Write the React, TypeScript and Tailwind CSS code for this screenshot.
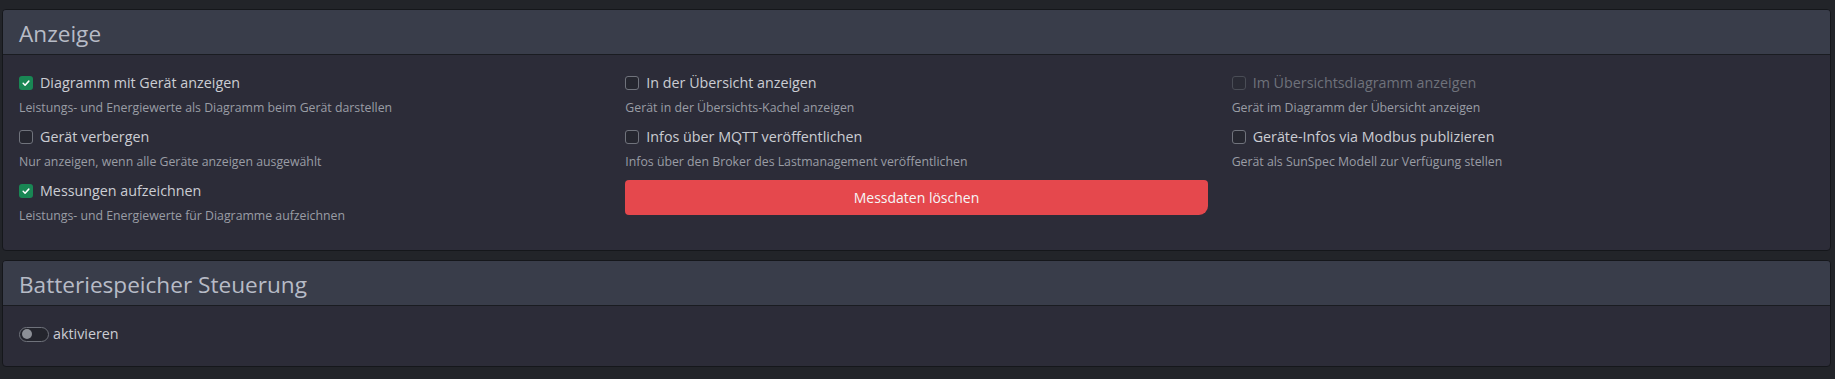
import { useState } from 'react';

const FONT = "font-['Open_Sans','Noto_Sans',sans-serif]";

interface CheckProps {
  label: string;
  hint: string;
  checked?: boolean;
  disabled?: boolean;
}

function CheckItem({ label, hint, checked = false, disabled = false }: CheckProps) {
  const [on, setOn] = useState(checked);
  return (
    <div className="flex flex-col">
      <label className="flex h-[22px] items-center gap-[7px]">
        <button
          type="button"
          disabled={disabled}
          onClick={() => setOn(!on)}
          className={
            on
              ? 'flex h-[14px] w-[14px] items-center justify-center rounded-[3px] bg-[#198754]'
              : disabled
                ? 'h-[14px] w-[14px] rounded-[3px] border border-[#4a4d56] bg-[#2a2b35]'
                : 'h-[14px] w-[14px] rounded-[3px] border border-[#70737c] bg-[#262730]'
          }
        >
          {on && (
            <svg viewBox="0 0 16 16" className="h-[10px] w-[10px]">
              <path d="M3.5 8.5l3 3 6-6.5" fill="none" stroke="#fff" strokeWidth="2.4" strokeLinecap="round" strokeLinejoin="round" />
            </svg>
          )}
        </button>
        <span className={disabled ? 'text-[14.3px] text-[#6f727b]' : 'text-[14.3px] text-[#cbcdd3]'}>{label}</span>
      </label>
      <p className="mt-[5px] h-[18px] text-[12.3px] leading-[18px] text-[#9a9da5]">{hint}</p>
    </div>
  );
}

function Card({ title, children }: { title: string; children: React.ReactNode }) {
  return (
    <section className="overflow-hidden rounded-[4px] border border-[#15171b] bg-[#2c2c38]">
      <div className="flex h-[45px] items-center border-b border-[#1a1c21] bg-[#393d4a] px-[16px] pt-[3px]">
        <h2 className="text-[22.6px] text-[#b7bbc6]">{title}</h2>
      </div>
      {children}
    </section>
  );
}

export default function App() {
  const [active, setActive] = useState(false);

  return (
    <div className={`min-h-[379px] w-[1835px] bg-[#222429] pl-[2px] pr-[4px] pt-[9px] ${FONT}`}>
      <Card title="Anzeige">
        <div className="grid grid-cols-3 gap-x-6 px-[16px] pb-[25px] pt-[17px]">
          <div className="flex flex-col gap-[9px]">
            <CheckItem label="Diagramm mit Gerät anzeigen" hint="Leistungs- und Energiewerte als Diagramm beim Gerät darstellen" checked />
            <CheckItem label="Gerät verbergen" hint="Nur anzeigen, wenn alle Geräte anzeigen ausgewählt" />
            <CheckItem label="Messungen aufzeichnen" hint="Leistungs- und Energiewerte für Diagramme aufzeichnen" checked />
          </div>
          <div className="flex flex-col gap-[9px]">
            <CheckItem label="In der Übersicht anzeigen" hint="Gerät in der Übersichts-Kachel anzeigen" />
            <CheckItem label="Infos über MQTT veröffentlichen" hint="Infos über den Broker des Lastmanagement veröffentlichen" />
            <button
              type="button"
              className="h-[35px] w-full rounded-[4px] rounded-br-[9px] bg-[#e5484d] text-[14px] text-[#f6f6f6]"
            >
              Messdaten löschen
            </button>
          </div>
          <div className="flex flex-col gap-[9px]">
            <CheckItem label="Im Übersichtsdiagramm anzeigen" hint="Gerät im Diagramm der Übersicht anzeigen" disabled />
            <CheckItem label="Geräte-Infos via Modbus publizieren" hint="Gerät als SunSpec Modell zur Verfügung stellen" />
          </div>
        </div>
      </Card>

      <div className="mt-[9px]">
        <Card title="Batteriespeicher Steuerung">
          <div className="px-[16px] pb-[21px] pt-[17px]">
            <label className="flex h-[22px] items-center gap-[4px]">
              <button
                type="button"
                onClick={() => setActive(!active)}
                className="flex h-[15px] w-[30px] items-center rounded-full border border-[#6f727b] bg-[#24252d] px-[2px]"
              >
                <span className="h-[10px] w-[10px] rounded-full bg-[#8c8f96]" />
              </button>
              <span className="text-[14.3px] text-[#cbcdd3]">aktivieren</span>
            </label>
          </div>
        </Card>
      </div>
    </div>
  );
}
